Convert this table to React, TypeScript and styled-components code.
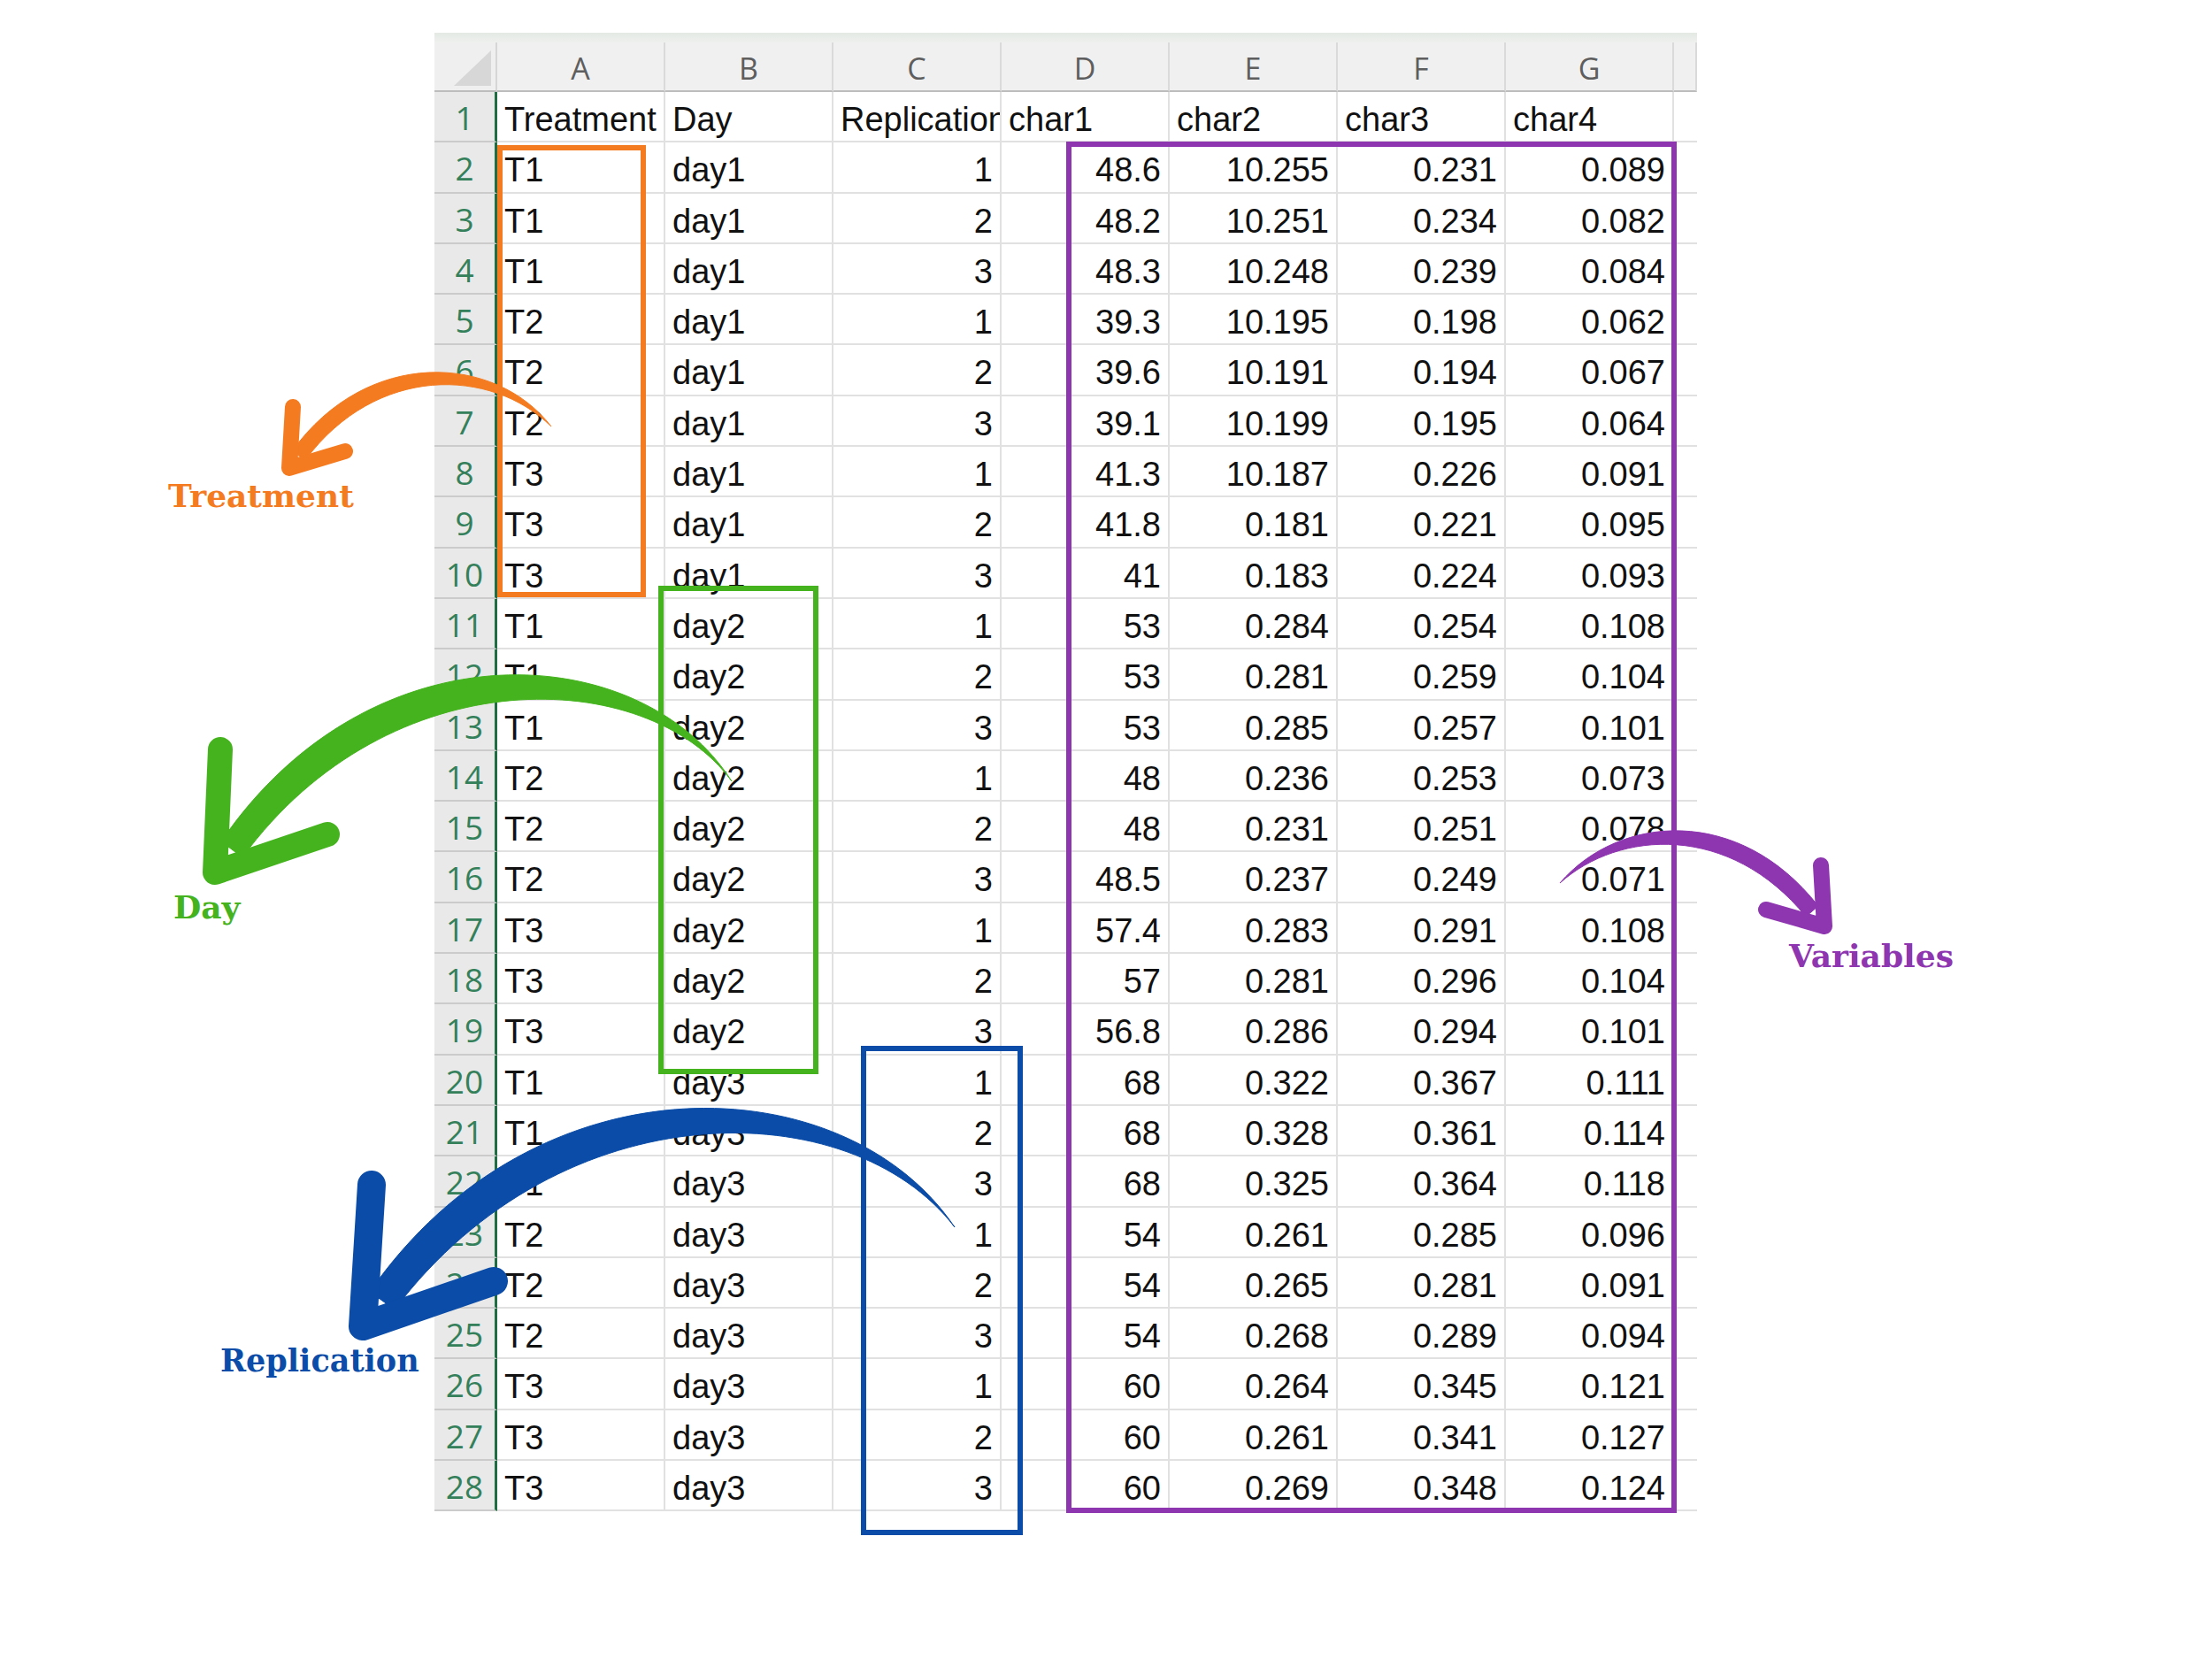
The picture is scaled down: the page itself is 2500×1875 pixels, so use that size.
import React from 'react';
import styled, { createGlobalStyle } from 'styled-components';

const GlobalStyle = createGlobalStyle`
  *, *::before, *::after { box-sizing: border-box; }
  html, body { margin: 0; padding: 0; background: #ffffff; }
  body { font-family: 'Liberation Sans', Arial, sans-serif; color: #111; }
`;

const Page = styled.div`
  position: relative;
  width: 2500px;
  height: 1875px;
  overflow: hidden;
  background: #ffffff;
`;

const Sheet = styled.div`
  margin: 37px 0 0 491px;
  width: 1427px;
`;

const TopBand = styled.div`
  height: 11px;
  background: linear-gradient(#e4e9e4, #eef0ee);
`;

const Grid = styled.div`
  display: grid;
  grid-template-columns: 71px repeat(7, 190px) 26px;
  grid-template-rows: 56px repeat(28, 57.3px);
`;

const Corner = styled.div`
  background: #efefef;
  border-right: 2px solid #d6d6d6;
  border-bottom: 2px solid #bdbdbd;
  display: flex;
  justify-content: flex-end;
  align-items: flex-end;
  padding: 0 5px 5px 0;

  &::after {
    content: '';
    width: 42px;
    height: 40px;
    background: #d7d7d7;
    clip-path: polygon(100% 0, 100% 100%, 0 100%);
  }
`;

const ColHeader = styled.div`
  background: #f0f0f0;
  border-right: 2px solid #dadada;
  border-bottom: 2px solid #bdbdbd;
  padding-top: 5px;
  font-family: 'Open Sans', 'Noto Sans', sans-serif;
  font-size: 34px;
  line-height: 49px;
  color: #5e5e5e;
  text-align: center;
`;

const RowHeader = styled.div`
  background: #e9e9e9;
  border-bottom: 2px solid #cbcbcb;
  border-right: 3px solid #1f6d42;
  padding-top: 3px;
  font-family: 'Open Sans', 'Noto Sans', sans-serif;
  font-size: 37px;
  line-height: 52px;
  color: #33805a;
  text-align: center;
`;

const Cell = styled.div<{ $align?: 'left' | 'right' }>`
  background: #ffffff;
  border-right: 2px solid #e1e1e1;
  border-bottom: 2px solid #e1e1e1;
  padding: 7px 8px 0 8px;
  font-size: 38px;
  line-height: 48px;
  white-space: nowrap;
  overflow: hidden;
  text-align: ${({ $align }) => $align ?? 'left'};
`;

const EdgeCell = styled.div`
  background: #ffffff;
  border-bottom: 2px solid #e1e1e1;
`;

const Box = styled.div<{ $color: string; $x: number; $y: number; $w: number; $h: number }>`
  position: absolute;
  left: ${({ $x }) => $x}px;
  top: ${({ $y }) => $y}px;
  width: ${({ $w }) => $w}px;
  height: ${({ $h }) => $h}px;
  border: 6px solid ${({ $color }) => $color};
  pointer-events: none;
`;

const Label = styled.div<{ $color: string; $x: number; $y: number; $size?: number }>`
  position: absolute;
  left: ${({ $x }) => $x}px;
  top: ${({ $y }) => $y}px;
  font-family: 'DejaVu Serif', 'Liberation Serif', serif;
  font-weight: 700;
  font-size: ${({ $size }) => $size ?? 36}px;
  line-height: 1;
  color: ${({ $color }) => $color};
  white-space: nowrap;
`;

const ArrowLayer = styled.svg`
  position: absolute;
  left: 0;
  top: 0;
  width: 2500px;
  height: 1875px;
  pointer-events: none;
`;

const ORANGE = '#f47b20';
const GREEN = '#45b31e';
const BLUE = '#0a4ca7';
const PURPLE = '#8e35b0';

const letters = ['A', 'B', 'C', 'D', 'E', 'F', 'G'];
const heading = ['Treatment', 'Day', 'Replication', 'char1', 'char2', 'char3', 'char4'];

const rows: (string | number)[][] = [
  ['T1', 'day1', 1, '48.6', '10.255', '0.231', '0.089'],
  ['T1', 'day1', 2, '48.2', '10.251', '0.234', '0.082'],
  ['T1', 'day1', 3, '48.3', '10.248', '0.239', '0.084'],
  ['T2', 'day1', 1, '39.3', '10.195', '0.198', '0.062'],
  ['T2', 'day1', 2, '39.6', '10.191', '0.194', '0.067'],
  ['T2', 'day1', 3, '39.1', '10.199', '0.195', '0.064'],
  ['T3', 'day1', 1, '41.3', '10.187', '0.226', '0.091'],
  ['T3', 'day1', 2, '41.8', '0.181', '0.221', '0.095'],
  ['T3', 'day1', 3, '41', '0.183', '0.224', '0.093'],
  ['T1', 'day2', 1, '53', '0.284', '0.254', '0.108'],
  ['T1', 'day2', 2, '53', '0.281', '0.259', '0.104'],
  ['T1', 'day2', 3, '53', '0.285', '0.257', '0.101'],
  ['T2', 'day2', 1, '48', '0.236', '0.253', '0.073'],
  ['T2', 'day2', 2, '48', '0.231', '0.251', '0.078'],
  ['T2', 'day2', 3, '48.5', '0.237', '0.249', '0.071'],
  ['T3', 'day2', 1, '57.4', '0.283', '0.291', '0.108'],
  ['T3', 'day2', 2, '57', '0.281', '0.296', '0.104'],
  ['T3', 'day2', 3, '56.8', '0.286', '0.294', '0.101'],
  ['T1', 'day3', 1, '68', '0.322', '0.367', '0.111'],
  ['T1', 'day3', 2, '68', '0.328', '0.361', '0.114'],
  ['T1', 'day3', 3, '68', '0.325', '0.364', '0.118'],
  ['T2', 'day3', 1, '54', '0.261', '0.285', '0.096'],
  ['T2', 'day3', 2, '54', '0.265', '0.281', '0.091'],
  ['T2', 'day3', 3, '54', '0.268', '0.289', '0.094'],
  ['T3', 'day3', 1, '60', '0.264', '0.345', '0.121'],
  ['T3', 'day3', 2, '60', '0.261', '0.341', '0.127'],
  ['T3', 'day3', 3, '60', '0.269', '0.348', '0.124'],
];

// tapered curved body + rounded chevron head
const arrows = [
  {
    color: ORANGE,
    body: 'M 623 482 C 560 400, 415 392, 330 510 L 345 520 C 425 412, 555 415, 623 482 Z',
    head: 'M 331 460 L 327 529 L 390 510',
    width: 18,
  },
  {
    color: GREEN,
    body: 'M 827 883 C 725 722, 420 702, 250 951 L 274 969 C 440 742, 732 752, 827 883 Z',
    head: 'M 249 847 L 243 986 L 370 943',
    width: 28,
  },
  {
    color: BLUE,
    body: 'M 1079 1387 C 955 1203, 605 1190, 418 1460 L 446 1480 C 635 1230, 962 1234, 1079 1387 Z',
    head: 'M 420 1339 L 410 1499 L 558 1448',
    width: 32,
  },
  {
    color: PURPLE,
    body: 'M 1763 998 C 1830 920, 1966 910, 2055 1024 L 2041 1036 C 1955 930, 1830 938, 1763 998 Z',
    head: 'M 2058 978 L 2062 1047 L 1996 1028',
    width: 18,
  },
];

export default function App() {
  return (
    <Page>
      <GlobalStyle />
      <Sheet>
        <TopBand />
        <Grid>
          <Corner />
          {letters.map((l) => (
            <ColHeader key={l}>{l}</ColHeader>
          ))}
          <ColHeader />

          <RowHeader>1</RowHeader>
          {heading.map((h) => (
            <Cell key={h}>{h}</Cell>
          ))}
          <EdgeCell />

          {rows.map((r, i) => (
            <React.Fragment key={i}>
              <RowHeader>{i + 2}</RowHeader>
              {r.map((v, j) => (
                <Cell key={j} $align={j >= 2 ? 'right' : 'left'}>
                  {v}
                </Cell>
              ))}
              <EdgeCell />
            </React.Fragment>
          ))}
        </Grid>
      </Sheet>

      <Box $color={ORANGE} $x={562} $y={164} $w={168} $h={511} />
      <Box $color={GREEN} $x={744} $y={662} $w={181} $h={552} />
      <Box $color={BLUE} $x={973} $y={1182} $w={183} $h={553} />
      <Box $color={PURPLE} $x={1205} $y={160} $w={690} $h={1550} />

      <ArrowLayer viewBox="0 0 2500 1875">
        {arrows.map((a) => (
          <g key={a.color} fill={a.color} stroke={a.color}>
            <path d={a.body} strokeWidth={1} />
            <path
              d={a.head}
              fill="none"
              strokeWidth={a.width}
              strokeLinecap="round"
              strokeLinejoin="round"
            />
          </g>
        ))}
      </ArrowLayer>

      <Label $color={ORANGE} $x={190} $y={542}>Treatment</Label>
      <Label $color={GREEN} $x={196} $y={1007}>Day</Label>
      <Label $color={BLUE} $x={249} $y={1520} $size={35}>Replication</Label>
      <Label $color={PURPLE} $x={2022} $y={1062} $size={36}>Variables</Label>
    </Page>
  );
}
